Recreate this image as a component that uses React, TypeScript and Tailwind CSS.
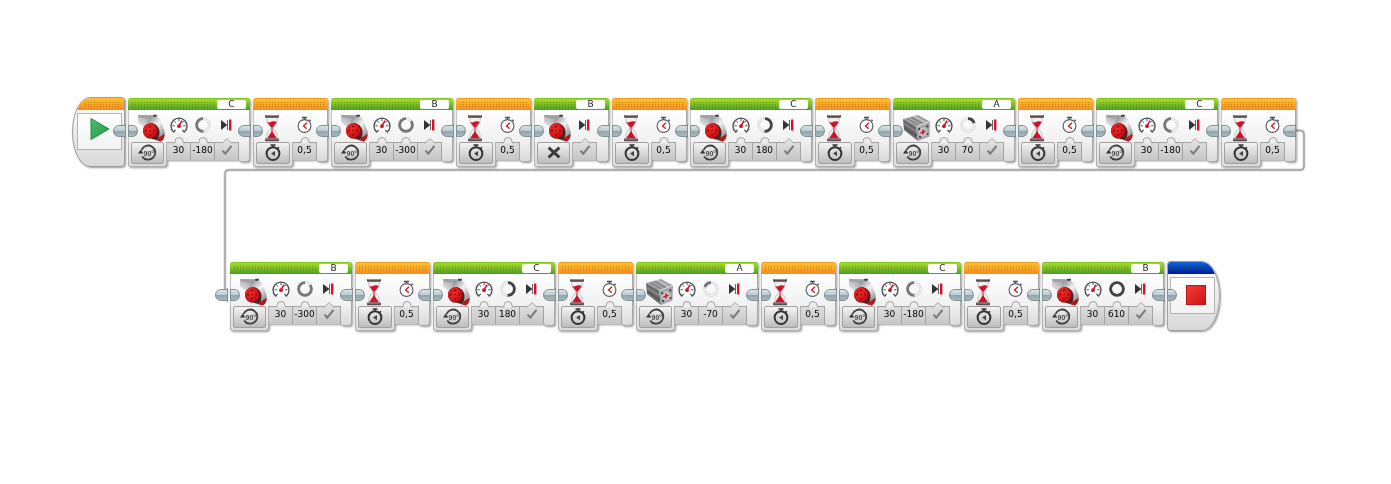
import React from "react";

type Block =
  | { kind: "motor"; port: string; power: string; degrees: string; medium?: boolean }
  | { kind: "off"; port: string }
  | { kind: "wait"; seconds: string };

const wait: Block = { kind: "wait", seconds: "0,5" };
const large = (port: string, degrees: string): Block => ({ kind: "motor", port, power: "30", degrees });
const medium = (port: string, degrees: string): Block => ({ kind: "motor", port, power: "30", degrees, medium: true });

const firstRow: Block[] = [
  large("C", "-180"), wait,
  large("B", "-300"), wait,
  { kind: "off", port: "B" }, wait,
  large("C", "180"), wait,
  medium("A", "70"), wait,
  large("C", "-180"), wait,
];

const secondRow: Block[] = [
  large("B", "-300"), wait,
  large("C", "180"), wait,
  medium("A", "-70"), wait,
  large("C", "-180"), wait,
  large("B", "610"),
];

function LargeMotorIcon() {
  return (
    <svg viewBox="0 0 28 28" className="h-7 w-7" aria-hidden="true">
      <defs>
        <linearGradient id="lm-shell" x1="0" y1="1" x2="0.8" y2="0">
          <stop offset="0" stopColor="#f1f1f2" />
          <stop offset="0.45" stopColor="#c9c9cb" />
          <stop offset="1" stopColor="#97979a" />
        </linearGradient>
        <linearGradient id="lm-rim" x1="0.2" y1="0" x2="1" y2="1">
          <stop offset="0" stopColor="#8b8b8e" />
          <stop offset="0.4" stopColor="#f2f2f3" />
          <stop offset="0.75" stopColor="#a3a3a6" />
          <stop offset="1" stopColor="#4a3c3e" />
        </linearGradient>
        <radialGradient id="lm-hub" cx="0.4" cy="0.35" r="0.7">
          <stop offset="0" stopColor="#fb2a26" />
          <stop offset="1" stopColor="#c90d13" />
        </radialGradient>
      </defs>
      <path d="M0 1 L15 1.5 L15 8 L7 14 L0 8.5 Z" fill="url(#lm-shell)" />
      <path d="M0 1 L15 1.5 L14 5 L1 3.5 Z" fill="#a1a1a4" />
      <path d="M12 3 Q18 0.5 22 5 L26.5 17 Q28 24 23 27.5 L17 26 L8 12 Z" fill="url(#lm-rim)" />
      <path d="M13 9 Q20 10 21.5 17 Q22 22 19 26 L14 25 Z" fill="#3a2a2c" />
      <path d="M19 24.5 L26.4 20 Q27 24.5 22.5 27.5 L18 26 Z" fill="#b3191d" />
      <rect x="15" y="0.8" width="4" height="2" rx="1" fill="#3c3c3f" />
      <ellipse cx="12.6" cy="17" rx="7.6" ry="7.8" fill="#840e12" />
      <ellipse cx="12" cy="16.6" rx="7" ry="7.2" fill="url(#lm-hub)" />
      <g fill="#7f1013">
        <circle cx="12" cy="12.6" r="1.1" />
        <circle cx="12" cy="20.8" r="1.1" />
        <circle cx="8" cy="16.6" r="1.1" />
        <circle cx="16" cy="16.6" r="1.1" />
        <circle cx="9.2" cy="13.8" r="0.7" />
        <circle cx="14.9" cy="19.5" r="0.7" />
        <circle cx="12" cy="16.6" r="0.9" />
      </g>
    </svg>
  );
}

function MediumMotorIcon() {
  return (
    <svg viewBox="0 0 28 28" className="h-7 w-7" aria-hidden="true">
      <path d="M0 5 L15 1 L27 7.5 L13 12.5 Z" fill="#a2a2a5" />
      <path d="M0 5 L13 12.5 L15 27 L1 16 Z" fill="#6b6b6e" />
      <path d="M13 12.5 L27 7.5 L26.5 22.5 L15 27 Z" fill="#a6a6a9" />
      <path d="M4 4.5 L16 11.4 M8 3.2 L20 10" stroke="#77777a" strokeWidth="1" />
      <path d="M11 2 L23 8.8" stroke="#d7d7d9" strokeWidth="1" />
      <path d="M1.5 10 L13.4 17.5" stroke="#8f8f92" strokeWidth="1.2" />
      <path d="M1.6 13.5 L14 22" stroke="#515154" strokeWidth="1.2" />
      <path d="M13 12.5 L27 7.5" stroke="#dededf" strokeWidth="1" />
      <circle cx="20" cy="18" r="4.4" fill="#c6c6c9" />
      <g fill="#3d3d40">
        <circle cx="16.2" cy="15.2" r="1.1" />
        <circle cx="24.4" cy="12.4" r="1.1" />
        <circle cx="24.6" cy="20" r="1.1" />
        <circle cx="17" cy="23" r="1.1" />
      </g>
      <path d="M20 15.6 V20.6 M17.4 18.9 L22.6 17.2" stroke="#c41f2b" strokeWidth="1.6" />
    </svg>
  );
}

function HourglassIcon() {
  return (
    <svg viewBox="0 0 16 28" className="h-7 w-4" aria-hidden="true">
      <path d="M2.5 3.5 L3.2 9 L7 14 L3.2 19 L2.5 25 H13.5 L12.8 19 L9 14 L12.8 9 L13.5 3.5 Z" fill="#f0eeee" stroke="#b4b4b4" strokeWidth="0.7" />
      <path d="M3.2 8 Q6 9 8 7.6 Q10 6.5 12.8 8 L9 13.2 H7 Z" fill="#c9142a" />
      <path d="M8 17 L13.2 24.8 H2.8 Z" fill="#c9142a" />
      <path d="M8 13 V19" stroke="#c9142a" strokeWidth="1" />
      <rect x="1" y="1" width="14" height="2.8" rx="0.8" fill="#55494b" />
      <rect x="1" y="24.4" width="14" height="2.8" rx="0.8" fill="#55494b" />
      <path d="M2 1.6 H14 M2 25 H14" stroke="#b3a9aa" strokeWidth="0.8" />
    </svg>
  );
}

function GaugeIcon() {
  return (
    <svg viewBox="0 0 18 18" className="size-[18px]" aria-hidden="true">
      <path d="M4.2 16 H3.6 A8 8 0 1 1 14.4 16 H13.8" fill="#fff" stroke="#4a4a4c" strokeWidth="1.3" />
      <path d="M3.8 15.8 L5.6 14 M14.2 15.8 L12.4 14" stroke="#4a4a4c" strokeWidth="1.2" />
      <path d="M9 2.5 V5.2 M2.5 9.8 H4.8 M15.5 9.8 H13.2 M4.4 5 L6 6.6 M13.6 5 L12.4 6.4" stroke="#4a4a4c" strokeWidth="1" />
      <path d="M9 10 L12 4.6" stroke="#d0142c" strokeWidth="1.6" />
      <circle cx="9" cy="10.2" r="1.9" fill="#d0142c" />
    </svg>
  );
}

function RingIcon({ degrees }: { degrees: number }) {
  const length = 2 * Math.PI * 6.4;
  const part = Math.min(Math.abs(degrees), 360) / 360;
  const turn = degrees < 0 ? "translate(18 0) scale(-1 1) rotate(-90 9 9)" : "rotate(-90 9 9)";
  return (
    <svg viewBox="0 0 18 18" className="size-[18px]" aria-hidden="true">
      <circle cx="9" cy="9" r="6.4" fill="none" stroke="#d2d2d2" strokeWidth="2.6" />
      <circle cx="9" cy="9" r="6.4" fill="none" stroke="#f4f4f4" strokeWidth="1.2" />
      <circle cx="9" cy="9" r="6.4" fill="none" stroke={degrees < 0 ? "#77777a" : "#434346"} strokeWidth="2.8" strokeDasharray={`${length * part} ${length}`} transform={turn} />
    </svg>
  );
}

function BrakeIcon() {
  return (
    <svg viewBox="0 0 18 18" className="size-[18px]" aria-hidden="true">
      <path d="M3 4 L9.4 9 L3 14 Z" fill="#333335" />
      <path d="M9.5 4 V14" stroke="#66666a" strokeWidth="1" />
      <path d="M12.2 3.5 V14.5" stroke="#d3122c" strokeWidth="2.4" />
    </svg>
  );
}

function StopwatchIcon() {
  return (
    <svg viewBox="0 0 18 18" className="size-[18px]" aria-hidden="true">
      <path d="M6 1.4 H11 M8.5 1.4 V4 M13.4 3.8 L14.6 5" stroke="#4b4b4e" strokeWidth="1.5" />
      <circle cx="8.5" cy="10" r="6.4" fill="#fff" stroke="#5a5a5d" strokeWidth="1.1" />
      <path d="M11 6.8 L7.6 10 L10.8 12.8" fill="none" stroke="#d3222f" strokeWidth="1.5" />
    </svg>
  );
}

function DegreesModeIcon() {
  return (
    <svg viewBox="0 0 24 20" className="h-5 w-6" aria-hidden="true">
      <path d="M5.6 7 A7.1 7.1 0 1 1 6.2 13.4" fill="none" stroke="#3e3e40" strokeWidth="1.8" />
      <path d="M2 10.6 L4.8 6.4 L7.2 10.6 Z" fill="#333335" />
      <text x="12.8" y="12.5" textAnchor="middle" fontSize="7" fontFamily="Liberation Sans, sans-serif" fontWeight="700" fill="#4a4a4c">90°</text>
    </svg>
  );
}

function TimeModeIcon() {
  return (
    <svg viewBox="0 0 20 20" className="size-5" aria-hidden="true">
      <path d="M7.5 2 H12.5 M10 2 V4.5 M14.8 4.2 L16 5.4" stroke="#333335" strokeWidth="1.6" />
      <circle cx="10" cy="10.6" r="6.4" fill="none" stroke="#333335" strokeWidth="2" />
      <path d="M12 8 L8 10.6 L12 13.2 Z" fill="#454548" />
    </svg>
  );
}

function OffModeIcon() {
  return (
    <svg viewBox="0 0 20 20" className="size-5" aria-hidden="true">
      <path d="M4.6 4.6 L15.4 14.4 M15.4 4.6 L4.6 14.4" stroke="#3a3a3c" strokeWidth="2.8" />
    </svg>
  );
}

function CheckIcon() {
  return (
    <svg viewBox="0 0 12 12" className="size-3" aria-hidden="true">
      <path d="M1.5 6.6 L4.3 9.7 L10.5 1.8" fill="none" stroke="#7b7b7d" strokeWidth="2.1" />
    </svg>
  );
}

/* Plug that joins the output of one block to the input of the next. */
function Plug({ side }: { side: "both" | "left" }) {
  const both = side === "both";
  return (
    <svg viewBox={both ? "0 0 27 14" : "0 0 16 14"} className={both ? "h-[14px] w-[27px]" : "h-[14px] w-4"} aria-hidden="true">
      <defs>
        <linearGradient id="plug" x1="0" y1="0" x2="0" y2="1">
          <stop offset="0" stopColor="#dbe6e9" />
          <stop offset="0.48" stopColor="#bccace" />
          <stop offset="0.52" stopColor="#8fa4ab" />
          <stop offset="1" stopColor="#a9bbc0" />
        </linearGradient>
      </defs>
      <path d="M13.5 1.5 H6.5 Q1.5 2.5 1.5 7 Q1.5 11.5 6.5 12.5 H13.5 Z" fill="url(#plug)" stroke="#7f9197" strokeWidth="1" />
      <path d="M13.5 0 V14" stroke="#8b8f91" strokeWidth="1" />
      {both && (
        <>
          <rect x="14" y="1" width="2" height="12" fill="#e9eeef" />
          <path d="M16.5 1.5 H21.5 Q25.5 2.5 25.5 7 Q25.5 11.5 21.5 12.5 H16.5 Z" fill="url(#plug)" stroke="#7f9197" strokeWidth="1" />
        </>
      )}
    </svg>
  );
}

function Notch({ pointed }: { pointed?: boolean }) {
  return (
    <svg viewBox="0 0 12 8" className="absolute -top-[7px] left-1/2 h-2 w-3 -translate-x-1/2" aria-hidden="true">
      {pointed ? (
        <path d="M1 7.5 L6 2.5 L11 7.5" fill="#e2e2e2" stroke="#a3a3a3" />
      ) : (
        <path d="M1 7.5 Q2 7 2 5.5 A4 4 0 0 1 10 5.5 Q10 7 11 7.5" fill="#ececec" stroke="#a3a3a3" />
      )}
    </svg>
  );
}

function Column({ icon, pointed, children }: { icon: React.ReactNode; pointed?: boolean; children: React.ReactNode }) {
  return (
    <div className="flex w-6 flex-col">
      <div className="flex h-8 items-center justify-center bg-gradient-to-b from-white to-[#f0f0f0] pb-[2px]">{icon}</div>
      <div className="relative flex h-[18px] items-center justify-center border-t border-r border-[#a3a3a3] bg-gradient-to-b from-[#dedede] to-[#c6c6c6] pb-[3px]">
        <Notch pointed={pointed} />
        {children}
      </div>
    </div>
  );
}

function ValueField({ label, value }: { label: string; value: string }) {
  return (
    <input
      aria-label={label}
      defaultValue={value}
      className="w-full bg-transparent p-0 text-center text-[9px] leading-3 text-black outline-none"
    />
  );
}

const dots = "h-[5px] flex-1 bg-[conic-gradient(at_1px_1px,transparent_270deg,rgba(70,60,0,0.32)_0)] bg-[size:3px_2px]";

function BlockView({ block, last }: { block: Block; last: boolean }) {
  const isWait = block.kind === "wait";
  return (
    <section className="relative h-[69px] shrink-0 drop-shadow-[1px_1px_1px_rgba(0,0,0,0.4)]" aria-label={isWait ? "Wait" : "Motor"}>
      <header
        className={
          isWait
            ? "flex h-3 items-center rounded-t-[3px] border-t border-[#e8a01c] bg-gradient-to-b from-[#ffc02d] to-[#f98a1c] px-1"
            : "flex h-3 items-center rounded-t-[3px] border-t border-[#7fc31c] bg-gradient-to-b from-[#a6de22] to-[#4a9f26] px-1"
        }
      >
        <span className={dots} />
        {block.kind !== "wait" && (
          <select
            aria-label="Port"
            defaultValue={block.port}
            className="ml-px h-[9px] w-[29px] appearance-none rounded-[2px] bg-white p-0 text-center text-[9px] leading-[9px] text-[#222] [text-align-last:center]"
          >
            <option>{block.port}</option>
          </select>
        )}
      </header>
      <div className="flex items-start">
        <div className={isWait ? "flex w-10 flex-col" : "flex w-[39px] flex-col"}>
          <div className="flex h-8 items-center justify-end border-l border-[#c4c4c4] bg-gradient-to-b from-white to-[#f0f0f0] pt-1 pr-px">
            {block.kind === "wait" ? (
              <span className="mr-3"><HourglassIcon /></span>
            ) : block.kind === "motor" && block.medium ? (
              <MediumMotorIcon />
            ) : (
              <LargeMotorIcon />
            )}
          </div>
          <div className="flex h-[25px] flex-col rounded-b-[3px] border-r border-b border-l border-[#b0b0b0] bg-gradient-to-b from-[#f0f0f0] to-[#dcdcdc] px-[2px] pb-[2px]">
            <button
              type="button"
              aria-label="Mode"
              className="flex min-h-0 flex-1 items-center justify-center rounded-[2px] border border-[#a0a0a0] bg-gradient-to-b from-[#f4f4f4] to-[#bdbdbd]"
            >
              {block.kind === "wait" ? <TimeModeIcon /> : block.kind === "off" ? <OffModeIcon /> : <DegreesModeIcon />}
            </button>
          </div>
        </div>
        {block.kind === "wait" && (
          <Column icon={<StopwatchIcon />}>
            <ValueField label="Seconds" value={block.seconds} />
          </Column>
        )}
        {block.kind === "motor" && (
          <>
            <Column icon={<GaugeIcon />}>
              <ValueField label="Power" value={block.power} />
            </Column>
            <Column icon={<RingIcon degrees={Number(block.degrees)} />}>
              <ValueField label="Degrees" value={block.degrees} />
            </Column>
          </>
        )}
        {block.kind !== "wait" && (
          <Column icon={<BrakeIcon />} pointed>
            <button type="button" aria-label="Brake at end"><CheckIcon /></button>
          </Column>
        )}
        <div className={block.kind === "off" ? "w-3" : "w-[11px]"}>
          <div className="h-8 border-r border-[#a8a8a8] bg-gradient-to-b from-white to-[#f0f0f0]" />
          <div className="h-5 rounded-b-[3px] border-r border-b border-[#a8a8a8] bg-gradient-to-b from-[#f0f0f0] to-[#dadada]" />
        </div>
      </div>
      {last && (
        <div className="absolute top-[26px] -right-[2px]">
          <Plug side="left" />
        </div>
      )}
    </section>
  );
}

function Joint() {
  return (
    <div className="relative z-10 w-[3px] shrink-0">
      <div className="absolute top-[26px] -left-[13px]">
        <Plug side="both" />
      </div>
    </div>
  );
}

function Sequence({ blocks, open }: { blocks: Block[]; open: boolean }) {
  return (
    <>
      {blocks.map((block, i) => (
        <React.Fragment key={i}>
          <Joint />
          <BlockView block={block} last={open && i === blocks.length - 1} />
        </React.Fragment>
      ))}
    </>
  );
}

function StartBlock() {
  return (
    <section aria-label="Start" className="flex h-[70px] w-[53px] shrink-0 flex-col overflow-hidden border border-[#9d9d9d] bg-gradient-to-b from-white to-[#d9d9d9] shadow-[1px_1px_2px_rgba(0,0,0,0.4)] [border-radius:18px_4px_4px_18px/35px_4px_4px_35px]">
      <div className="flex h-3 shrink-0 items-center bg-gradient-to-b from-[#ffc02d] to-[#f98a1c] pr-1 pl-3">
        <span className={dots} />
      </div>
      <button type="button" aria-label="Run" className="mt-[3px] mr-[2px] ml-1 flex h-[37px] items-center justify-center border border-[#b3b3b3] bg-gradient-to-b from-white to-[#f2f2f2] pb-[6px]">
        <svg viewBox="0 0 22 24" className="h-6 w-[22px]" aria-hidden="true">
          <defs>
            <linearGradient id="run" x1="0" y1="0" x2="1" y2="1">
              <stop offset="0" stopColor="#4fbd72" />
              <stop offset="1" stopColor="#239447" />
            </linearGradient>
          </defs>
          <path d="M2 1.5 L20 12 L2 22.5 Z" fill="url(#run)" stroke="#1f8f45" strokeLinejoin="round" />
        </svg>
      </button>
    </section>
  );
}

function StopBlock() {
  return (
    <section aria-label="Stop program" className="flex h-[70px] w-[53px] shrink-0 flex-col overflow-hidden border border-[#9d9d9d] bg-gradient-to-b from-white to-[#d9d9d9] shadow-[1px_1px_2px_rgba(0,0,0,0.4)] [border-radius:4px_18px_18px_4px/4px_35px_35px_4px]">
      <div className="flex h-3 shrink-0 items-center bg-gradient-to-b from-[#1565d8] to-[#0414a0] pr-3 pl-1">
        <span className={dots} />
      </div>
      <button type="button" aria-label="Stop" className="mt-[3px] mr-1 ml-[2px] flex h-[37px] items-center justify-center border border-[#b3b3b3] bg-gradient-to-b from-white to-[#f2f2f2] pb-[2px] pl-[6px]">
        <span className="size-5 border border-[#c0121a] bg-gradient-to-br from-[#f23a35] to-[#d00f18]" />
      </button>
    </section>
  );
}

export default function App() {
  const wire = "M1296 130.5 H1300 Q1304 130.5 1304 134.5 V166 Q1304 170 1300 170 H229 Q225 170 225 174 V290";
  return (
    <main className="relative min-h-screen bg-white pt-[97px] font-['DejaVu_Sans',sans-serif]">
      <svg viewBox="0 0 1391 484" className="pointer-events-none absolute top-0 left-0 h-[484px] w-[1391px]" aria-hidden="true">
        <path d={wire} fill="none" stroke="#e6e6e6" strokeWidth="3.4" />
        <path d={wire} fill="none" stroke="#a0a0a0" strokeWidth="1.5" />
      </svg>
      <div className="relative flex items-start pl-[72px]">
        <StartBlock />
        <div className="flex pt-px">
          <Sequence blocks={firstRow} open />
        </div>
      </div>
      <div className="relative mt-[94px] flex items-start pl-[227px]">
        <div className="flex pt-px">
          <Sequence blocks={secondRow} open={false} />
          <Joint />
        </div>
        <StopBlock />
      </div>
    </main>
  );
}
